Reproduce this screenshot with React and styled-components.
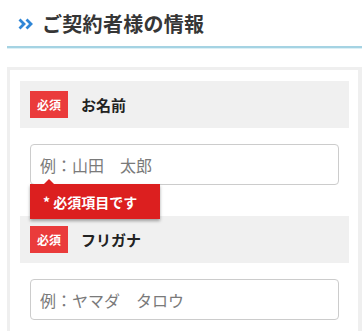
import styled, { createGlobalStyle } from "styled-components";

const GlobalStyle = createGlobalStyle`
    body {
        margin: 0;
        background: #fff;
        font-family: "Noto Sans CJK JP", "Noto Sans", sans-serif;
        overflow: hidden;
    }
`

const Page = styled.div`
    padding-left: 7px;
`

const Heading = styled.div`
    display: flex;
    align-items: center;
    gap: 8px;
    height: 46px;
    padding-left: 11px;
    border-bottom: 2px solid #a5d3e3;
    box-shadow: 0 1px 0 #dcf0f6;
`

const Chevron = styled.svg`
    width: 16px;
    height: 12px;
    margin-top: 1px;
`

const Title = styled.h2`
    margin: 0;
    font-size: 20px;
    font-weight: 700;
    color: #363636;
    letter-spacing: 0.3px;
`

const Panel = styled.div`
    margin-top: 19px;
    border: 3px solid #efefef;
    border-right-width: 4px;
    padding: 11px 9px 0 10px;
`

const LabelBar = styled.div`
    display: flex;
    align-items: center;
    gap: 13px;
    height: 47px;
    padding-left: 10px;
    background: #f0f0f0;
`

const Badge = styled.span`
    display: inline-flex;
    align-items: center;
    justify-content: center;
    width: 38px;
    height: 27px;
    background: #ea3b3b;
    color: #fff;
    font-size: 12px;
    font-weight: 700;
`

const LabelText = styled.span`
    font-size: 15px;
    font-weight: 700;
    color: #222;
`

const InputArea = styled.div`
    position: relative;
    padding: 16px 10px 31px;
`

const TextInput = styled.input`
    box-sizing: border-box;
    width: 100%;
    height: 41px;
    padding: 0 9px;
    border: 1px solid #cccccc;
    border-radius: 4px;
    font-family: inherit;
    font-size: 16px;
    color: #333;
    outline: none;

    &::placeholder {
        color: #7a7a7a;
    }
`

const ErrorTip = styled.div`
    position: absolute;
    top: 56px;
    left: 10px;
    width: 130px;
    height: 35px;
    display: flex;
    align-items: center;
    padding-left: 13px;
    box-sizing: border-box;
    background: #dc1f1f;
    color: #fff;
    font-size: 14px;
    font-weight: 700;
    box-shadow: 0 2px 3px rgba(0, 0, 0, 0.35);
    z-index: 2;

    &::before {
        content: "";
        position: absolute;
        top: -5px;
        left: 14px;
        border-left: 5px solid transparent;
        border-right: 5px solid transparent;
        border-bottom: 5px solid #dc1f1f;
    }
`

const Field = ({ label, placeholder, error }) => (
    <div>
        <LabelBar>
            <Badge>必須</Badge>
            <LabelText>{label}</LabelText>
        </LabelBar>
        <InputArea>
            <TextInput placeholder={placeholder} />
            {error && <ErrorTip>* 必須項目です</ErrorTip>}
        </InputArea>
    </div>
)

export default function App() {
    return (
        <Page>
            <GlobalStyle />
            <Heading>
                <Chevron viewBox="0 0 16 12">
                    <path d="M1.5 1.5 L6 6 L1.5 10.5" fill="none" stroke="#2f86d6" strokeWidth="2.8" />
                    <path d="M8.5 1.5 L13 6 L8.5 10.5" fill="none" stroke="#2f86d6" strokeWidth="2.8" />
                </Chevron>
                <Title>ご契約者様の情報</Title>
            </Heading>
            <Panel>
                <Field label="お名前" placeholder="例：山田　太郎" error />
                <Field label="フリガナ" placeholder="例：ヤマダ　タロウ" />
            </Panel>
        </Page>
    );
}
